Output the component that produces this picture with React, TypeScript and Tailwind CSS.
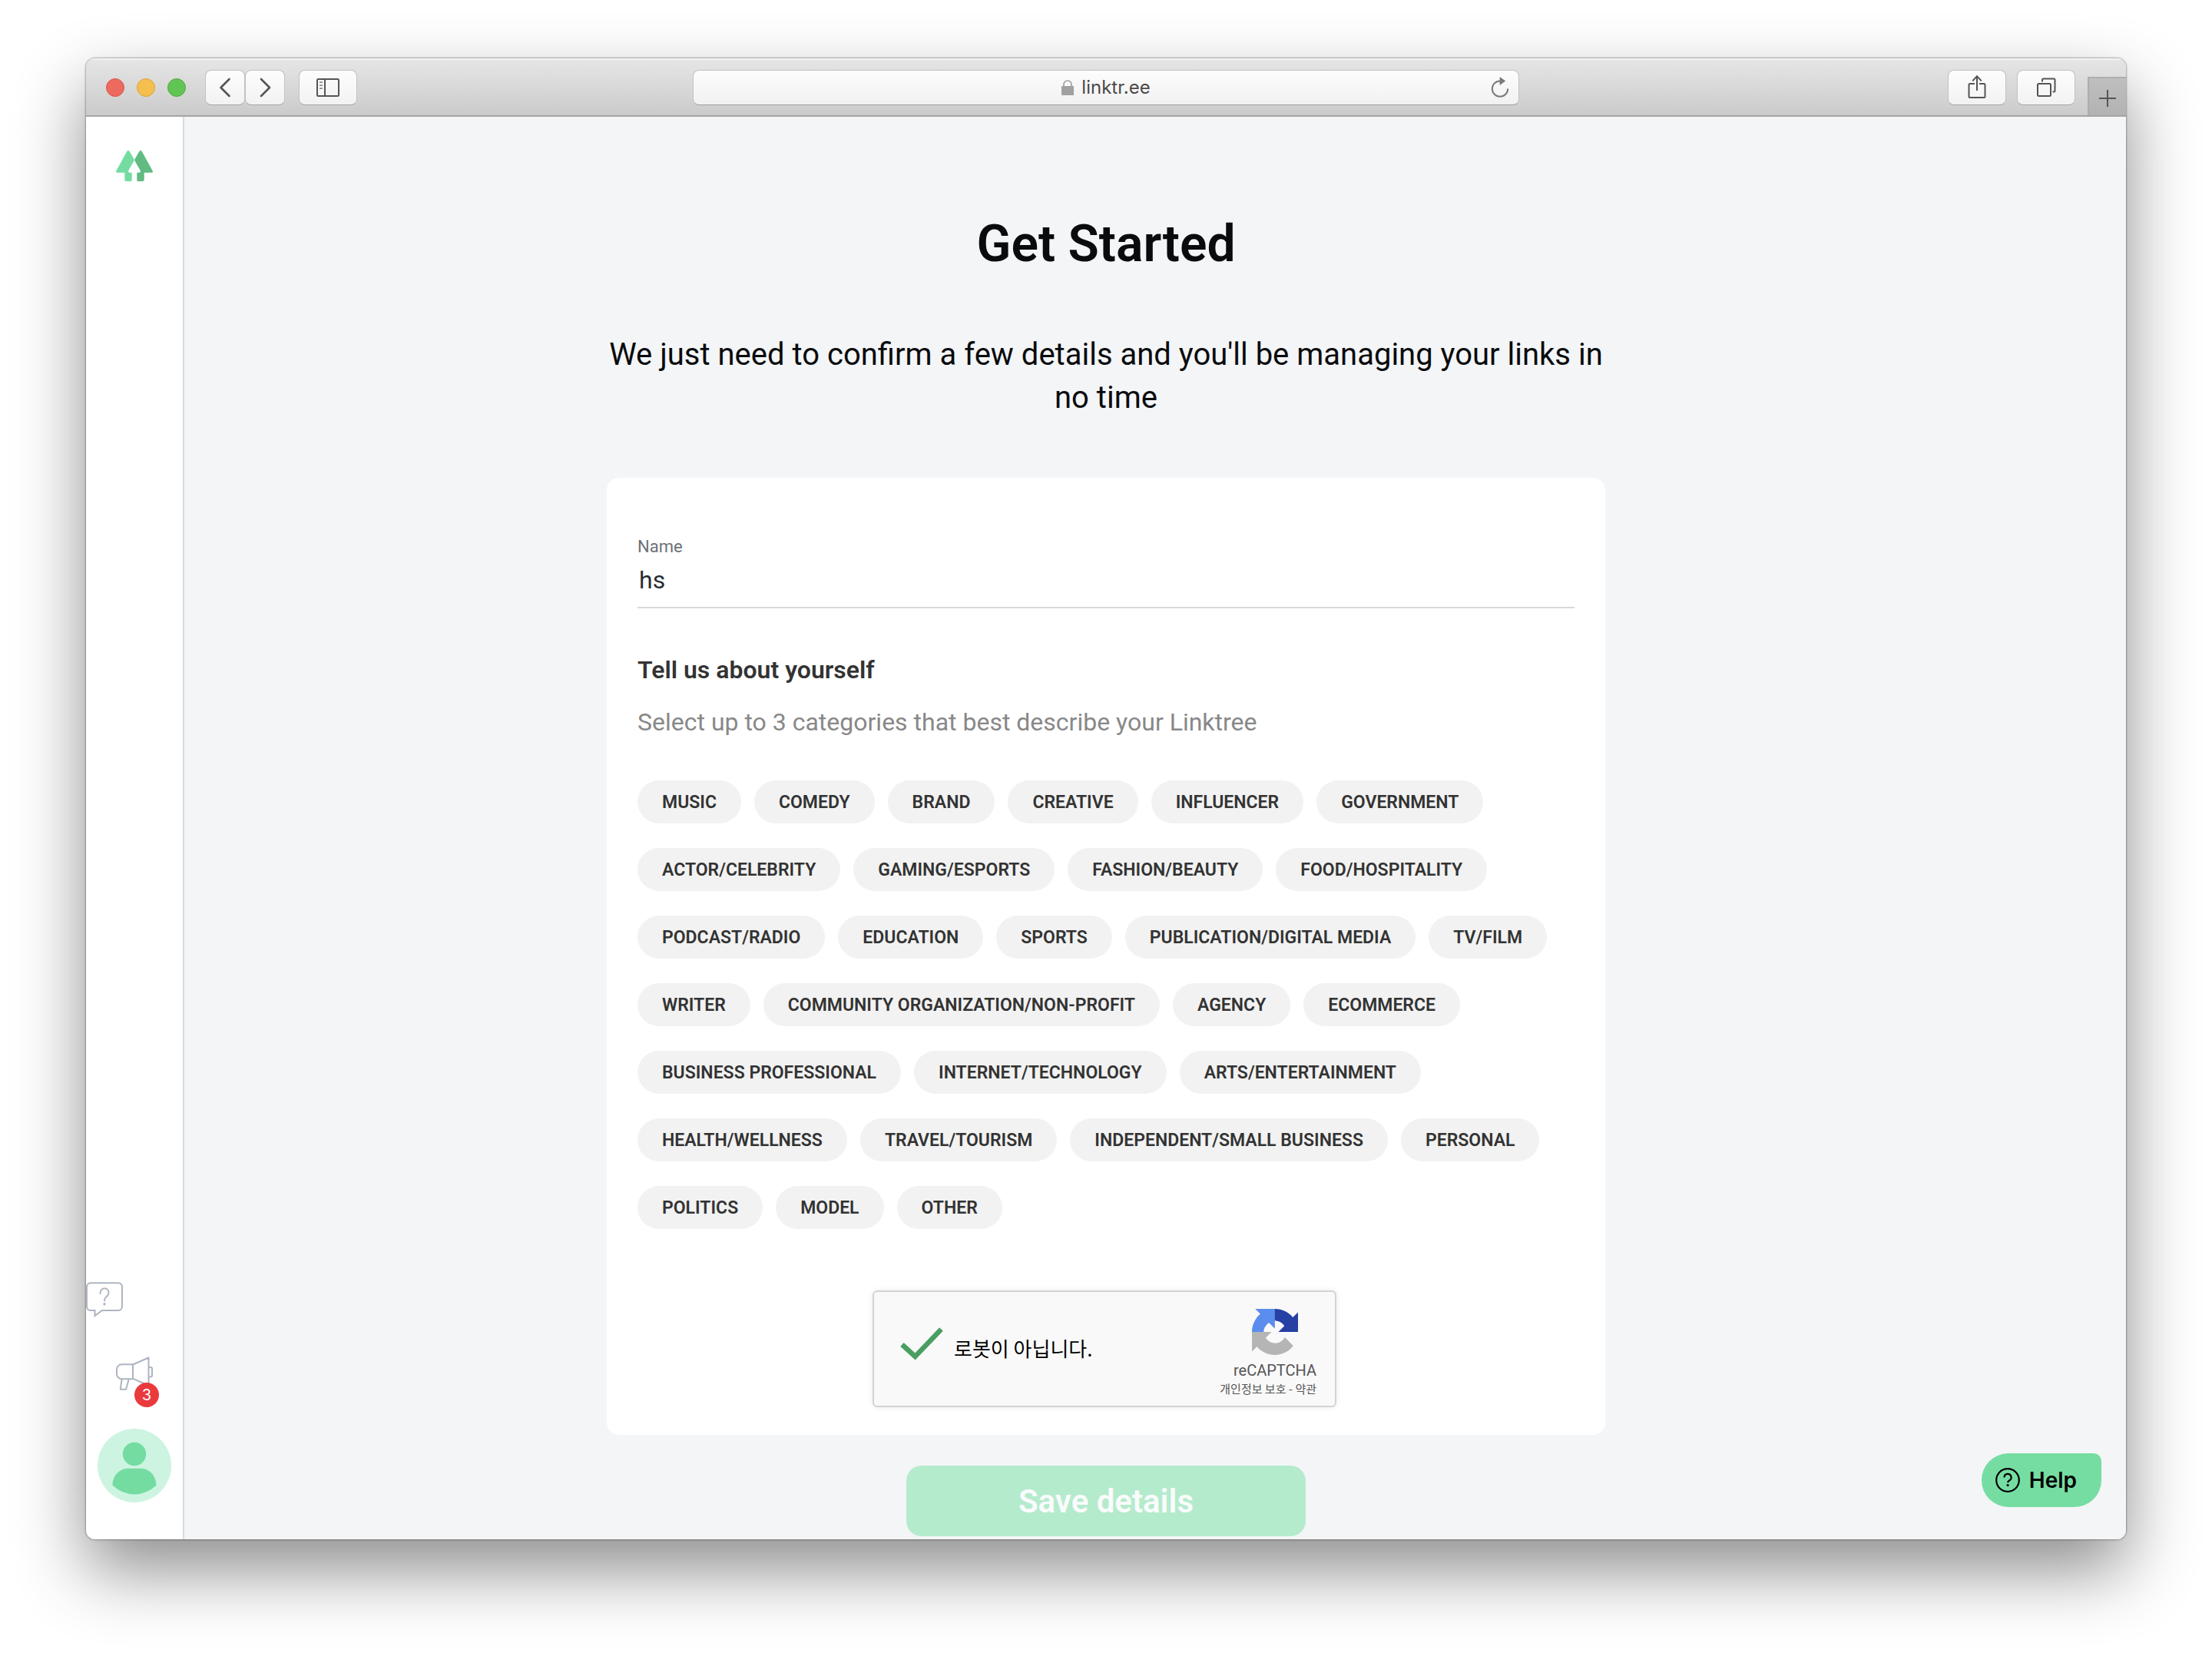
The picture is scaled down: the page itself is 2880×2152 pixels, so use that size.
import { useState } from "react";

const categories = [
  "MUSIC",
  "COMEDY",
  "BRAND",
  "CREATIVE",
  "INFLUENCER",
  "GOVERNMENT",
  "ACTOR/CELEBRITY",
  "GAMING/ESPORTS",
  "FASHION/BEAUTY",
  "FOOD/HOSPITALITY",
  "PODCAST/RADIO",
  "EDUCATION",
  "SPORTS",
  "PUBLICATION/DIGITAL MEDIA",
  "TV/FILM",
  "WRITER",
  "COMMUNITY ORGANIZATION/NON-PROFIT",
  "AGENCY",
  "ECOMMERCE",
  "BUSINESS PROFESSIONAL",
  "INTERNET/TECHNOLOGY",
  "ARTS/ENTERTAINMENT",
  "HEALTH/WELLNESS",
  "TRAVEL/TOURISM",
  "INDEPENDENT/SMALL BUSINESS",
  "PERSONAL",
  "POLITICS",
  "MODEL",
  "OTHER",
];

const toolButton =
  "flex h-[46px] items-center justify-center rounded-lg border border-[#c2c2c2] border-b-[#a6a6a6] bg-linear-to-b from-[#fdfdfd] to-[#f2f2f2] text-[#555]";

function TitleBar() {
  return (
    <header className="grid h-[76px] grid-cols-[1fr_minmax(0,1076px)_1fr] items-center border-b-2 border-[#a5a5a5] bg-linear-to-b from-[#e6e6e6] to-[#cbcbcb] pt-0.5 shadow-[inset_0_2px_0_#f3f3f3]">
      <div className="flex items-center pl-[26px]">
        <div className="flex gap-4">
          <span className="size-6 rounded-full border border-[#d9554b] bg-[#ec6a5e]" />
          <span className="size-6 rounded-full border border-[#dda23c] bg-[#f4bf4f]" />
          <span className="size-6 rounded-full border border-[#52a83d] bg-[#61c554]" />
        </div>
        <div className="ml-[25px] flex">
          <button type="button" aria-label="Back" className={`${toolButton} w-[52px]`}>
            <svg viewBox="0 0 16 26" className="h-[26px] w-4" fill="none" stroke="currentColor" strokeWidth="2.6" strokeLinecap="round" strokeLinejoin="round">
              <path d="M13.500 2 2.500 13l11 11" />
            </svg>
          </button>
          <button type="button" aria-label="Forward" className={`${toolButton} w-[52px]`}>
            <svg viewBox="0 0 16 26" className="h-[26px] w-4" fill="none" stroke="currentColor" strokeWidth="2.6" strokeLinecap="round" strokeLinejoin="round">
              <path d="m3 2 11 11L3 24" />
            </svg>
          </button>
        </div>
        <button type="button" aria-label="Show sidebar" className={`${toolButton} ml-[18px] w-[76px]`}>
          <svg viewBox="0 0 30 24" className="h-6 w-[30px]" fill="none" stroke="currentColor" strokeWidth="2">
            <rect x="1" y="1" width="28" height="22" rx="1.5" />
            <path d="M11 1v22" />
            <path d="M4 5.2h4M4 9.2h4M4 13.2h4" stroke="#8c8c8c" strokeWidth="1.8" />
          </svg>
        </button>
      </div>

      <div className="grid h-[46px] grid-cols-[1fr_auto_1fr] items-center rounded-lg border border-[#c2c2c2] border-b-[#a0a0a0] bg-linear-to-b from-[#fdfdfd] to-[#f1f1f1] px-3">
        <span />
        <span className="flex items-center gap-2.5 font-['Inter',sans-serif] text-2xl text-[#4a4a4a]">
          <svg viewBox="0 0 16 20" className="h-5 w-4" fill="none">
            <rect y="8" width="16" height="12" rx=".6" fill="#a0a0a0" />
            <path d="M3 9V6a5 5 0 0 1 10 0v3" stroke="#a0a0a0" strokeWidth="1.7" />
          </svg>
          linktr.ee
        </span>
        <button type="button" aria-label="Reload" className="justify-self-end text-[#7a7a7a]">
          <svg viewBox="0 0 24 28" className="h-7 w-6" fill="none" stroke="currentColor" strokeWidth="2">
            <path d="M12 5.4A10.2 10.2 0 1 0 22.2 15.6" />
            <path d="M11.6 0v11l7.6-5.5z" fill="currentColor" stroke="none" />
          </svg>
        </button>
      </div>

      <div className="flex h-full items-center justify-end">
        <button type="button" aria-label="Share" className={`${toolButton} w-[76px]`}>
          <svg viewBox="0 0 24 32" className="h-8 w-6" fill="none" stroke="currentColor" strokeWidth="2">
            <path d="M9 11H3a1.500 1.500 0 0 0-1.500 1.500v15A1.500 1.500 0 0 0 3 29h18a1.500 1.500 0 0 0 1.500-1.500v-15A1.500 1.500 0 0 0 21 11h-6" />
            <path d="M12 20V1.500M6.200 7.400 12 1.200l5.800 6.200" />
          </svg>
        </button>
        <button type="button" aria-label="Show tabs" className={`${toolButton} ml-3.5 w-[76px]`}>
          <svg viewBox="0 0 26 26" className="size-[26px]" fill="none" stroke="currentColor" strokeWidth="2">
            <rect x="2" y="8" width="17" height="16" rx="1.5" />
            <path d="M8 5.500V3A1.500 1.500 0 0 1 9.500 1.500H23A1.500 1.500 0 0 1 24.500 3v14a1.500 1.500 0 0 1-1.500 1.500h-1.500" />
          </svg>
        </button>
        <button type="button" aria-label="New tab" className="ml-4 flex h-[50px] w-[50px] items-center justify-center self-end border-t-2 border-l-2 border-[#adadad] bg-linear-to-b from-[#bfbfbf] to-[#b2b2b2] pt-1 text-[#555]">
          <svg viewBox="0 0 22 22" className="size-[22px]" fill="none" stroke="currentColor" strokeWidth="2">
            <path d="M11 0v22M0 11h22" />
          </svg>
        </button>
      </div>
    </header>
  );
}

function Sidebar() {
  return (
    <nav className="flex w-32 shrink-0 flex-col items-center justify-between border-r-2 border-[#d7dae0] bg-white pt-11 pb-12">
      <a href="#home" aria-label="Linktree">
        <svg viewBox="0 0 48 40" className="h-10 w-12">
          <path fill="#74dca1" d="M14.3 1Q16-1 17.6 1l5.9 10.3q.6 1 0 2L16.300 26q-.8 2 1.200 2.700h3.200v9.800q0 1.500-1.500 1.500H13q-1.700 0-1.700-1.700v-9.600H1.200Q-.5 28.500.3 26.500z" />
          <path fill="#62bb82" d="M33.7 1Q32-1 30.4 1l-5.900 10.300q-.6 1 0 2L31.700 26q.8 2-1.200 2.700h-3.200v9.800q0 1.500 1.500 1.500H35q1.700 0 1.700-1.700v-9.600h10.100q1.700-.2.900-2.200z" />
        </svg>
      </a>

      <div className="flex w-full flex-col items-center gap-[50px]">
        <button type="button" aria-label="Support" className="self-start text-[#adb5c1]">
          <svg viewBox="0 0 48 48" className="size-12" fill="none" stroke="currentColor" strokeWidth="2">
            <path d="M6 2.200h36a5 5 0 0 1 5 5v25.800a5 5 0 0 1-5 5H21L11.500 45v-7H6a5 5 0 0 1-5-5V7.200a5 5 0 0 1 5-5Z" />
            <path d="M18.600 16v-1.200a5.500 5.500 0 0 1 11 0c0 3-1.700 4.200-3.200 5.500S24 22.800 24 25.500" strokeLinecap="round" />
            <circle cx="24" cy="29.7" r="1.7" fill="currentColor" stroke="none" />
          </svg>
        </button>
        <button type="button" aria-label="Announcements" className="relative text-[#adb5c1]">
          <svg viewBox="0 0 48 44" className="h-11 w-12" fill="none" stroke="currentColor" strokeWidth="2" strokeLinejoin="round">
            <path d="M22 10.200H7.500A6.500 6.500 0 0 0 1 16.700v6a6.500 6.500 0 0 0 6.500 6.500H22z" />
            <path d="m22 10.500 20.500-9v36L22 28.800M42.500 14H45a2 2 0 0 1 2 2v8.500a2 2 0 0 1-2 2h-2.500M7.600 29.500 5.800 42.800H13l3.700-13.300" />
          </svg>
          <span className="absolute top-[34px] left-6 flex size-8 items-center justify-center rounded-full bg-[#ea3a3d] font-['Inter',sans-serif] text-xl text-white">
            3
          </span>
        </button>
        <button type="button" aria-label="Account">
          <svg viewBox="0 0 96 96" className="size-24">
            <circle cx="48" cy="48" r="48" fill="#cdf4e1" />
            <circle cx="48" cy="33" r="15.2" fill="#74dca1" />
            <path fill="#74dca1" d="M40 51.800h16c12 0 20.500 10 20.500 22Q64 85.400 48 85.400T19.500 73.800c0-12 8.500-22 20.500-22" />
          </svg>
        </button>
      </div>
    </nav>
  );
}

function Captcha() {
  return (
    <div className="mt-20 mr-1 flex h-[152px] w-full max-w-[604px] justify-between self-center rounded-md border-2 border-[#d3d3d3] bg-[#f9f9f9] pr-6 pl-[34px] shadow-[0_0_8px_rgba(0,0,0,0.08)]">
      <label className="flex items-center gap-3.5 pb-1 font-['Noto_Sans_CJK_KR',sans-serif] text-[26px] text-black">
        <input type="checkbox" defaultChecked className="sr-only" />
        <svg viewBox="0 0 56 56" className="size-14" fill="none" stroke="#4a9e62" strokeWidth="6.5">
          <path d="M2.500 24.500 19.500 40 53.500 4.500" />
        </svg>
        로봇이 아닙니다.
      </label>
      <div className="flex flex-col items-end pt-[22px] text-[#555]">
        <svg viewBox="0 0 64 64" className="mr-6 size-[60px]">
          <path fill="#2640a4" d="M64 31.955l-.033-1.370V4.687l-7.160 7.160C50.948 4.674 42.033.093 32.050.093c-10.400 0-19.622 4.960-25.458 12.640l11.736 11.860a15.550 15.550 0 0 1 4.754-5.334c2.050-1.600 4.952-2.906 8.968-2.906.485 0 .860.057 1.135.163 4.976.393 9.288 3.140 11.828 7.124l-8.307 8.307L64 31.953" />
          <path fill="#5a8dee" d="M31.862.094l-1.370.033H4.594l7.160 7.160C4.580 13.147 0 22.060 0 32.046c0 10.400 4.960 19.622 12.640 25.458L24.500 45.768a15.550 15.550 0 0 1-5.334-4.754c-1.600-2.050-2.906-4.952-2.906-8.968 0-.485.057-.860.163-1.135.393-4.976 3.140-9.288 7.124-11.828l8.307 8.307L31.860.095" />
          <path fill="#b5b5b5" d="M.001 32.045l.033 1.370v25.898l7.160-7.160c5.860 7.173 14.774 11.754 24.760 11.754 10.400 0 19.622-4.960 25.458-12.640l-11.736-11.860a15.550 15.550 0 0 1-4.754 5.334c-2.050 1.600-4.952 2.906-8.968 2.906-.485 0-.860-.057-1.135-.163-4.976-.393-9.288-3.140-11.828-7.124l8.307-8.307c-10.522.040-22.400.066-27.295-.005" />
        </svg>
        <p className="mt-2 text-xl leading-6">reCAPTCHA</p>
        <p className="font-['Noto_Sans_CJK_KR',sans-serif] text-[15px] leading-6">
          <a href="#privacy">개인정보 보호</a> - <a href="#terms">약관</a>
        </p>
      </div>
    </div>
  );
}

export default function App() {
  const [name, setName] = useState("hs");
  const [picked, setPicked] = useState<string[]>([]);

  function toggle(category: string) {
    if (picked.includes(category)) setPicked(picked.filter((c) => c !== category));
    else if (picked.length < 3) setPicked([...picked, category]);
  }

  return (
    <div className="flex min-h-screen flex-col bg-white px-28 pt-[76px] pb-[148px] font-['Roboto',sans-serif]">
      <div className="relative flex flex-1 flex-col rounded-xl shadow-[0_0_2px_1px_rgba(0,0,0,0.3),0_40px_90px_rgba(0,0,0,0.45)]">
        <div className="flex flex-1 flex-col overflow-hidden rounded-xl">
          <TitleBar />
          <div className="flex flex-1">
            <Sidebar />
            <main className="flex flex-1 flex-col items-center bg-[#f4f5f7] pt-[126px] pr-32 pb-1 text-[#0a0b0d]">
              <h1 className="text-[66px] leading-20 font-semibold">Get Started</h1>
              <p className="mt-[76px] max-w-[1300px] text-center text-[40px] leading-14">
                We just need to confirm a few details and you'll be managing your links in no time
              </p>

              <form
                onSubmit={(e) => e.preventDefault()}
                className="mt-[76px] flex w-full max-w-[1300px] flex-col items-center gap-10"
              >
                <section className="flex w-full flex-col rounded-2xl bg-white px-10 pt-[76px] pb-9">
                  <label htmlFor="name" className="text-[22px] leading-7 text-[#6c7176]">
                    Name
                  </label>
                  <input
                    id="name"
                    value={name}
                    onChange={(e) => setName(e.target.value)}
                    className="mt-2.5 h-14 border-b-2 border-[#d5d9dd] px-0.5 pb-4 text-[32px] text-[#282d33] outline-none"
                  />

                  <h2 className="mt-[60px] text-[32px] leading-10 font-semibold text-[#333]">Tell us about yourself</h2>
                  <p className="mt-7 text-[32px] leading-10 text-[#888]">
                    Select up to 3 categories that best describe your Linktree
                  </p>

                  <div className="mt-14 flex flex-wrap gap-x-[17px] gap-y-8">
                    {categories.map((category) => (
                      <button
                        key={category}
                        type="button"
                        aria-pressed={picked.includes(category)}
                        onClick={() => toggle(category)}
                        className="h-14 rounded-full bg-[#f2f2f2] px-8 pt-0.5 text-[23px] font-semibold text-[#333] aria-pressed:bg-[#74dca1]"
                      >
                        {category}
                      </button>
                    ))}
                  </div>

                  <Captcha />
                </section>

                <button
                  type="submit"
                  className="h-[92px] w-full max-w-[520px] rounded-[20px] bg-[#b5ebcd] text-[42px] font-semibold text-[#fafbfc]"
                >
                  Save details
                </button>
              </form>
            </main>
          </div>
        </div>

        <button
          type="button"
          className="absolute right-8 bottom-[42px] flex h-[70px] items-center gap-3 rounded-[35px] rounded-tr-[10px] bg-[#76dda2] pr-8 pl-[18px] font-['Inter',sans-serif] text-[28px] font-semibold text-black"
        >
          <svg viewBox="0 0 32 32" className="size-8" fill="none" stroke="currentColor" strokeWidth="2.2">
            <circle cx="16" cy="16" r="14.8" />
            <path d="M11.600 12.400a4.500 4.500 0 1 1 6.800 3.800c-1.500.9-2.300 1.600-2.300 3.100" />
            <circle cx="16.1" cy="22.6" r="1.6" fill="currentColor" stroke="none" />
          </svg>
          Help
        </button>
      </div>
    </div>
  );
}
